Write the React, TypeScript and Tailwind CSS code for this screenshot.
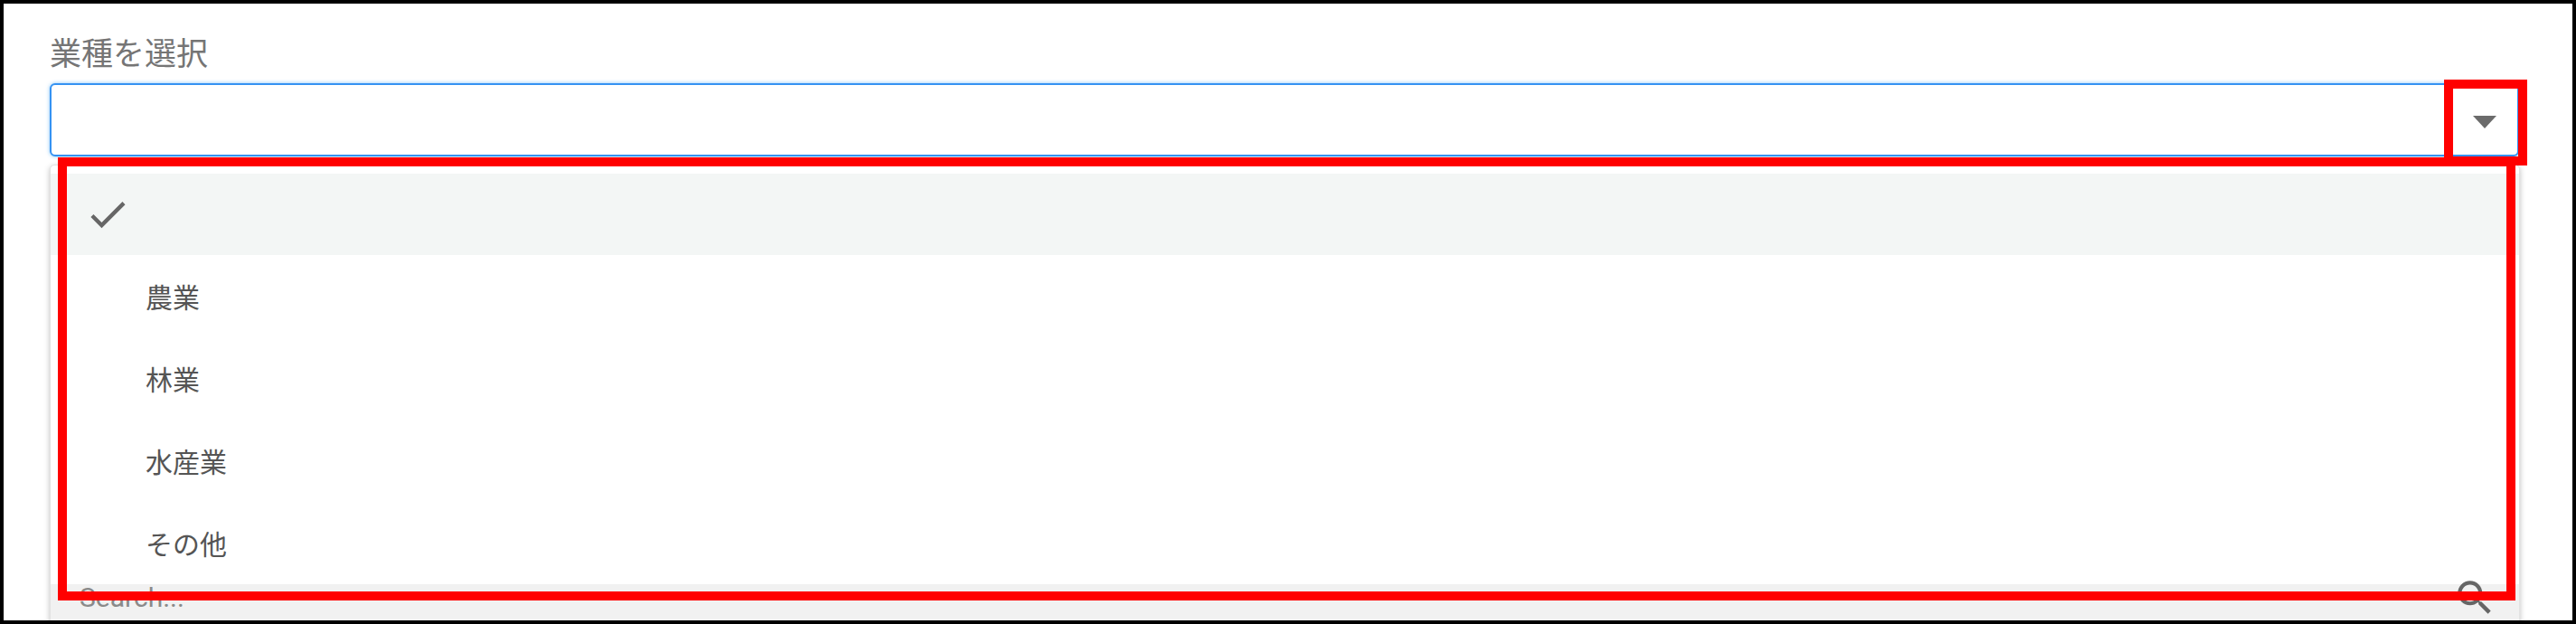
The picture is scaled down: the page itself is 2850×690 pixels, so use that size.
const items = ["農業", "林業", "水産業", "その他"];

export default function App() {
  return (
    <div className="w-[2850px] h-[690px] border-4 border-black bg-white overflow-hidden font-['Noto_Sans_CJK_JP',sans-serif]">
      <div className="pl-[51px] pr-[59px] pt-[35px]">
        {/* Label */}
        <div className="text-[35px] leading-[35px] text-[#757575]">業種を選択</div>

        <div className="relative mt-[18px]">
          {/* Select input */}
          <div className="h-[81px] rounded-[6px] border-2 border-[#3592f2] bg-white shadow-[0_0_4px_rgba(33,150,243,0.55)] flex items-center justify-end pr-[23px]">
            <svg width="26" height="14" viewBox="0 0 26 14" className="mt-[4px]">
              <polygon points="0,0 26,0 13,14" fill="#6b6b6b" />
            </svg>
          </div>

          {/* Dropdown panel */}
          <div className="mt-[9px] mr-[-1px] rounded-t-[5px] bg-white border border-[#e2e2e2] shadow-[0_2px_6px_rgba(0,0,0,0.25)] pt-[9px]">
            <div className="h-[90px] bg-[#f3f6f5] flex items-center pl-[37px]">
              <svg width="52" height="52" viewBox="0 0 24 24" fill="#666666">
                <path d="M9 16.17L4.83 12l-1.42 1.41L9 19 21 7l-1.41-1.41z" />
              </svg>
            </div>
            {items.map((item) => (
              <div
                key={item}
                className="h-[91px] flex items-center pl-[105px] text-[30px] text-[#555555]"
              >
                {item}
              </div>
            ))}
            <div className="h-[60px] bg-[#f1f1f1] flex items-start justify-between pl-[32px] pr-[24px]">
              <span className="font-['Roboto',sans-serif] text-[30px] leading-[30px] text-[#8a8a8a]">
                Search...
              </span>
              <svg width="50" height="50" viewBox="0 0 24 24" fill="#666666" className="-mt-[10px]">
                <path d="M15.5 14h-.79l-.28-.27C15.41 12.59 16 11.11 16 9.5 16 5.91 13.09 3 9.5 3S3 5.91 3 9.5 5.91 16 9.5 16c1.61 0 3.09-.59 4.23-1.57l.27.28v.79l5 4.99L20.49 19l-4.99-5zm-6 0C7.01 14 5 11.99 5 9.5S7.01 5 9.5 5 14 7.01 14 9.5 11.99 14 9.5 14z" />
              </svg>
            </div>
          </div>

          {/* Red highlight boxes */}
          <div className="absolute left-[2649px] top-[-4px] w-[92px] h-[95px] border-[10px] border-[#ff0000]" />
          <div className="absolute left-[9px] top-[82px] w-[2719px] h-[490px] border-[10px] border-[#ff0000]" />
        </div>
      </div>
    </div>
  );
}
